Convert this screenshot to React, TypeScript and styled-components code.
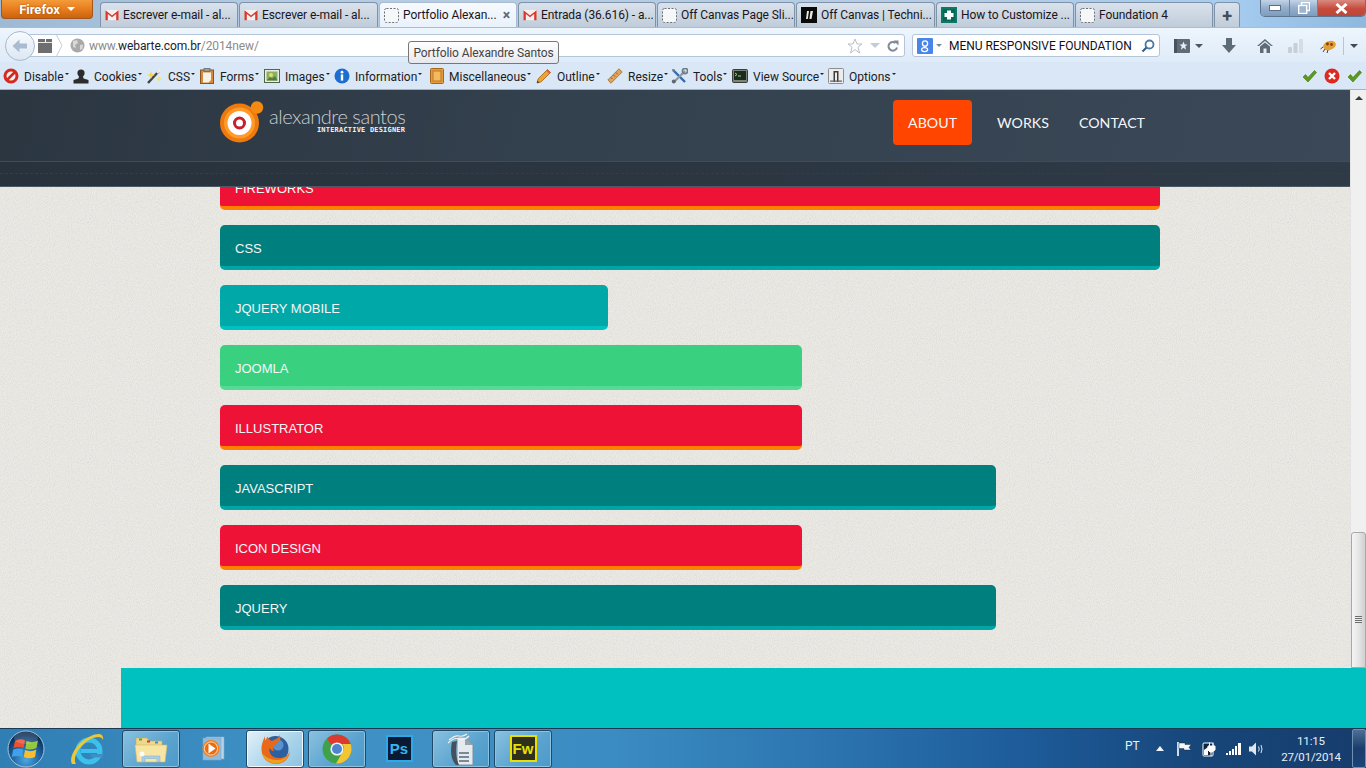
import React from "react";
import styled, { createGlobalStyle } from "styled-components";

const uiFont = `"Roboto", "Noto Sans", "Liberation Sans", sans-serif`;

const grain = `url("data:image/svg+xml,%3Csvg xmlns='http://www.w3.org/2000/svg' width='240' height='240'%3E%3Cfilter id='n'%3E%3CfeTurbulence type='fractalNoise' baseFrequency='.95' numOctaves='2' stitchTiles='stitch'/%3E%3CfeColorMatrix values='0 0 0 0 .45 0 0 0 0 .44 0 0 0 0 .4 0 0 0 .45 -.155'/%3E%3C/filter%3E%3Crect width='240' height='240' filter='url(%23n)'/%3E%3C/svg%3E")`;

const GlobalStyle = createGlobalStyle`
  html, body {
    margin: 0;
    padding: 0;
    height: 100%;
    overflow: hidden;
  }
  #root {
    height: 100%;
  }
`;

const Screen = styled.div`
  width: 1366px;
  height: 768px;
  display: flex;
  flex-direction: column;
  font-family: ${uiFont};
  position: relative;
  overflow: hidden;
`;

/* ---------- tab strip ---------- */

const TabStrip = styled.div`
  height: 27px;
  display: flex;
  flex: none;
  background: linear-gradient(90deg, #9db9d6 0%, #b4cbe2 20%, #b5cce4 70%, #a6cdf0 90%, #8fb8de 100%);
`;

const FirefoxButton = styled.div`
  width: 92px;
  height: 19px;
  margin: 0 7px 0 1px;
  flex: none;
  display: flex;
  align-items: center;
  justify-content: center;
  gap: 7px;
  color: #fff;
  font-size: 13px;
  font-weight: 700;
  border: 1px solid #a5561a;
  border-top: 0;
  border-radius: 0 0 4px 4px;
  box-sizing: border-box;
  background: linear-gradient(#f39b3a, #e87d1e 50%, #c9630e);
  text-shadow: 0 0 2px #8a4508;
`;

const Caret = styled.i<{ $size?: number; $color?: string }>`
  display: inline-block;
  width: 0;
  height: 0;
  flex: none;
  border-left: ${(p) => p.$size ?? 3}px solid transparent;
  border-right: ${(p) => p.$size ?? 3}px solid transparent;
  border-top: ${(p) => p.$size ?? 3}px solid ${(p) => p.$color ?? "#333"};
`;

const Tab = styled.div<{ $active?: boolean; $width: number }>`
  width: ${(p) => p.$width}px;
  height: 25px;
  margin-top: 2px;
  margin-right: 1px;
  flex: none;
  box-sizing: border-box;
  display: flex;
  align-items: center;
  gap: 4px;
  padding: 0 2px 0 4px;
  font-size: 12px;
  letter-spacing: -0.08px;
  color: #1a1420;
  white-space: nowrap;
  border: 1px solid ${(p) => (p.$active ? "#a8bbd0" : "#7f93a8")};
  border-bottom: 0;
  border-radius: 4px 4px 0 0;
  background: ${(p) =>
    p.$active
      ? "linear-gradient(#f6fafe, #e8f1fb)"
      : "linear-gradient(#d9e2ec, #c0ccd9)"};
  svg {
    flex: none;
  }
`;

const TabLabel = styled.span`
  flex: 1;
  min-width: 0;
`;

const TabClose = styled.span`
  color: #5f6a75;
  font-size: 14px;
  font-weight: 700;
  line-height: 1;
  margin-right: 4px;
`;

const NewTab = styled(Tab)`
  justify-content: center;
  padding: 0;
  color: #3f4d5c;
  font-size: 18px;
  font-weight: 700;
`;

const WindowControls = styled.div`
  position: absolute;
  top: 0;
  right: 0;
  width: 106px;
  height: 17px;
  display: flex;
  border: 1px solid #5d7590;
  border-top: 0;
  border-radius: 0 0 5px 5px;
  box-sizing: border-box;
  overflow: hidden;
`;

const WindowButton = styled.div<{ $close?: boolean; $width: number }>`
  width: ${(p) => p.$width}px;
  flex: ${(p) => (p.$close ? 1 : "none")};
  display: flex;
  align-items: center;
  justify-content: center;
  border-right: ${(p) => (p.$close ? 0 : "1px solid #6d84a0")};
  background: ${(p) =>
    p.$close
      ? "linear-gradient(#d98a80, #c74a3c 55%, #b8483a)"
      : "linear-gradient(#c2d4e6, #93aecb 50%, #7d9cbd)"};
`;

/* ---------- nav bar ---------- */

const NavBar = styled.div`
  height: 35px;
  flex: none;
  display: flex;
  align-items: center;
  box-sizing: border-box;
  padding: 1px 0 0 5px;
  position: relative;
  border-top: 1px solid #a9bcd0;
  background: linear-gradient(#edf5fd, #dfebf8);
`;

const BackCircle = styled.div`
  width: 30px;
  height: 30px;
  flex: none;
  z-index: 1;
  display: flex;
  align-items: center;
  justify-content: center;
  border-radius: 50%;
  border: 1px solid #a6b9cf;
  box-sizing: border-box;
  background: linear-gradient(#f8fbfe, #dce7f3);
`;

const UrlField = styled.div`
  width: 876px;
  height: 23px;
  margin-left: -6px;
  flex: none;
  display: flex;
  align-items: center;
  box-sizing: border-box;
  padding-left: 7px;
  background: #fff;
  border: 1px solid #b3c5d9;
  border-radius: 0 3px 3px 0;
`;

const IdentityBox = styled.div`
  width: 33px;
  height: 21px;
  flex: none;
  display: flex;
  align-items: center;
  overflow: hidden;
`;

const UrlText = styled.span`
  margin-left: 4px;
  font-size: 12px;
  color: #8b8b8b;
  letter-spacing: -0.1px;
  white-space: nowrap;
  flex: 1;
  b {
    color: #1a2230;
    font-weight: 400;
  }
`;

const UrlTools = styled.div`
  display: flex;
  align-items: center;
  gap: 7px;
  padding-right: 5px;
`;

const SearchField = styled.div`
  width: 248px;
  height: 23px;
  margin-left: 7px;
  flex: none;
  display: flex;
  align-items: center;
  box-sizing: border-box;
  padding: 0 4px 0 4px;
  background: #fff;
  border: 1px solid #b3c5d9;
  border-radius: 3px;
  font-size: 12px;
  letter-spacing: -0.03px;
  color: #10101c;
  white-space: nowrap;
`;

const EngineCaret = styled(Caret)`
  margin-left: 3px;
`;

const SearchLabel = styled.span`
  flex: 1;
  margin-left: 7px;
`;

const NavTools = styled.div`
  display: flex;
  align-items: center;
  margin-left: 11px;
`;

const NavSlot = styled.div<{ $width: number }>`
  width: ${(p) => p.$width}px;
  display: flex;
  align-items: center;
  justify-content: center;
  gap: 5px;
  flex: none;
`;

const NavSeparator = styled.div`
  width: 1px;
  height: 18px;
  background: #b7c6d6;
  flex: none;
`;

const Tooltip = styled.div`
  position: absolute;
  left: 408px;
  top: 41px;
  width: 151px;
  height: 23px;
  box-sizing: border-box;
  z-index: 5;
  display: flex;
  align-items: center;
  justify-content: center;
  font-size: 12px;
  letter-spacing: -0.1px;
  color: #444;
  background: linear-gradient(#fff, #e6e8ef);
  border: 1px solid #777;
  border-radius: 3px;
  white-space: nowrap;
`;

/* ---------- add-on bar ---------- */

const AddonBar = styled.div`
  height: 28px;
  flex: none;
  display: flex;
  align-items: center;
  box-sizing: border-box;
  padding-left: 3px;
  background: #d9e7f6;
  border-bottom: 1px solid #9fb2c6;
`;

const AddonItem = styled.div<{ $width: number }>`
  width: ${(p) => p.$width}px;
  flex: none;
  display: flex;
  align-items: center;
  gap: 5px;
  font-size: 12px;
  line-height: 16px;
  color: #1b1b22;
  white-space: nowrap;
  span {
    padding-top: 2px;
  }
`;

const AddonCaret = styled(Caret)`
  margin-left: -4px;
  margin-bottom: 3px;
`;

const AddonStatus = styled.div`
  margin-left: auto;
  display: flex;
  align-items: center;
  gap: 7px;
  padding-right: 4px;
`;

/* ---------- page ---------- */

const Viewport = styled.div`
  flex: 1;
  min-height: 0;
  position: relative;
  display: flex;
  flex-direction: column;
  background-color: #ebeae5;
  background-image: ${grain};
`;

const Header = styled.header`
  position: absolute;
  top: 0;
  left: 0;
  right: 16px;
  z-index: 3;
  height: 97px;
  border-bottom: 1px solid #4c5864;
  box-sizing: border-box;
  background: linear-gradient(100deg, #28323c, #2e3a46);
`;

const HeaderMain = styled.div`
  height: 72px;
  box-sizing: border-box;
  padding: 10px 0 0 220px;
  border-bottom: 1px solid #3f4c59;
  background: linear-gradient(100deg, #2b3641 0%, #33404d 40%, #3a4858 100%);
`;

const HeaderInner = styled.div`
  width: 940px;
  display: flex;
  justify-content: space-between;
  align-items: flex-start;
`;

const Logo = styled.div`
  display: flex;
  align-items: center;
  margin-top: 1px;
  gap: 5px;
`;

const LogoText = styled.div`
  display: flex;
  flex-direction: column;
  align-items: flex-end;
  margin-top: -3px;
`;

const LogoName = styled.span`
  font-family: "Lato", sans-serif;
  font-weight: 300;
  font-size: 20px;
  line-height: 19px;
  letter-spacing: -0.45px;
  color: #c9cdd1;
  white-space: nowrap;
`;

const LogoTag = styled.span`
  font-family: "DejaVu Sans Mono", monospace;
  font-weight: 700;
  font-size: 7px;
  line-height: 9px;
  letter-spacing: 0.2px;
  color: #f2f2f2;
  white-space: nowrap;
`;

const Menu = styled.nav`
  display: flex;
`;

const MenuLink = styled.a<{ $current?: boolean }>`
  height: 45px;
  padding: 0 15px;
  display: flex;
  align-items: center;
  border-radius: 4px;
  font-family: "Lato", sans-serif;
  font-size: 14.2px;
  font-weight: 400;
  color: #f4f7f9;
  background: ${(p) => (p.$current ? "#ff4500" : "transparent")};
  margin-right: ${(p) => (p.$current ? "10px" : "0")};
`;

const HeaderStrip = styled.div`
  height: 24px;
  box-sizing: border-box;
  padding-top: 11px;
  &::before {
    content: "";
    display: block;
    border-top: 1px dashed #323e4a;
  }
`;

const ScrollRow = styled.div`
  flex: 1;
  min-height: 0;
  display: flex;
`;

const Content = styled.main`
  flex: 1;
  min-width: 0;
  overflow: hidden;
  box-sizing: border-box;
  padding: 75px 0 0 220px;
`;

const Bars = styled.ul`
  width: 940px;
  margin: 0;
  padding: 0;
  list-style: none;
  display: flex;
  flex-direction: column;
  gap: 15px;
`;

const tones = {
  red: { fill: "#ef1237", edge: "#ff8000" },
  teal: { fill: "#007f7f", edge: "#00a5a5" },
  aqua: { fill: "#00a8a8", edge: "#00c1c1" },
  green: { fill: "#39d07f", edge: "#55da94" },
};

const Bar = styled.li<{ $tone: keyof typeof tones; $span: number }>`
  width: ${(p) => p.$span}px;
  height: 45px;
  box-sizing: border-box;
  padding: 6px 0 0 15px;
  display: flex;
  align-items: center;
  border-radius: 5px;
  border-bottom: 4px solid ${(p) => tones[p.$tone].edge};
  background: ${(p) => tones[p.$tone].fill};
  color: #f6f6f6;
  font-family: "Liberation Sans", Arial, sans-serif;
  font-size: 13px;
`;

const Scrollbar = styled.div`
  width: 16px;
  flex: none;
  display: flex;
  flex-direction: column;
  justify-content: space-between;
  background: #f0f0f0;
  border-left: 1px solid #e4e4e4;
  box-sizing: border-box;
`;

const ScrollArrow = styled.div`
  margin: 6px auto 0;
  width: 0;
  height: 0;
  border-left: 4px solid transparent;
  border-right: 4px solid transparent;
  border-bottom: 4px solid #3a3a3a;
`;

const ScrollThumb = styled.div`
  height: 136px;
  box-sizing: border-box;
  padding-top: 83px;
  border: 1px solid #a9a9a9;
  border-radius: 3px 3px 0 0;
  background: linear-gradient(90deg, #f4f4f4, #e6e6e6 50%, #cfcfcf);
  &::before {
    content: "";
    display: block;
    width: 7px;
    height: 7px;
    margin: 0 auto;
    background: repeating-linear-gradient(#6d6d6d 0 1px, #ececec 1px 2px);
  }
`;

const Footer = styled.footer`
  height: 60px;
  flex: none;
  margin-left: 121px;
  background: #00c1c0;
`;

/* ---------- taskbar ---------- */

const Taskbar = styled.div`
  height: 40px;
  flex: none;
  display: flex;
  align-items: center;
  box-sizing: border-box;
  border-top: 1px solid #1c3a55;
  background: linear-gradient(90deg, #2f7eb4 0%, #3f92c6 22%, #3b8cc2 45%, #2a72ae 62%, #1d5b9a 75%, #174679 88%, #163c6c 100%);
`;

const StartSlot = styled.div`
  width: 52px;
  height: 39px;
  flex: none;
  display: flex;
  align-items: center;
  justify-content: center;
`;

const IeSlot = styled.div`
  width: 70px;
  height: 39px;
  flex: none;
  display: flex;
  align-items: center;
  justify-content: center;
`;

const TaskButton = styled.div<{ $state?: "open" | "active" }>`
  width: 58px;
  height: 38px;
  margin-right: 4px;
  flex: none;
  display: flex;
  align-items: center;
  justify-content: center;
  box-sizing: border-box;
  border-radius: 3px;
  border: 1px solid ${(p) => (p.$state ? "#1f4a68" : "transparent")};
  box-shadow: ${(p) =>
    p.$state === "active"
      ? "inset 0 0 0 1px #f2f8fc"
      : p.$state === "open"
        ? "inset 0 0 0 1px #8cc3e0"
        : "none"};
  background: ${(p) =>
    p.$state === "active"
      ? "linear-gradient(135deg, #e3f1f9, #a9d3ea 60%, #8cc3e2)"
      : p.$state === "open"
        ? "linear-gradient(135deg, #8ac1df, #5aa3cf 60%, #4c99c9)"
        : "transparent"};
  font-family: "Liberation Sans", sans-serif;
`;

const AppTile = styled.div<{ $edge: string; $ink: string; $fill: string }>`
  width: 27px;
  height: 27px;
  box-sizing: border-box;
  display: flex;
  align-items: center;
  justify-content: center;
  border: 2px solid ${(p) => p.$edge};
  background: ${(p) => p.$fill};
  color: ${(p) => p.$ink};
  font-size: 15px;
  font-weight: 700;
`;

const Tray = styled.div`
  margin-left: auto;
  height: 39px;
  display: flex;
  align-items: center;
  color: #e8eff7;
`;

const TrayLang = styled.span`
  font-size: 12px;
  width: 29px;
  margin-bottom: 6px;
`;

const TraySlot = styled.div<{ $width: number }>`
  width: ${(p) => p.$width}px;
  display: flex;
  justify-content: center;
  flex: none;
  svg {
    flex: none;
  }
`;

const Clock = styled.div`
  width: 70px;
  margin-left: 14px;
  text-align: center;
  font-size: 11.5px;
  letter-spacing: -0.15px;
  line-height: 16px;
  flex: none;
`;

const ShowDesktop = styled.div`
  width: 14px;
  height: 39px;
  margin-left: 6px;
  flex: none;
  box-sizing: border-box;
  border: 1px solid #6f8fb3;
  border-radius: 2px;
  background: linear-gradient(#4d6f97, #1a3d6c 50%, #1a4478);
`;

/* ---------- drawn icons ---------- */

const GmailIcon = () => (
  <svg width="14" height="12" viewBox="0 0 15 12">
    <rect x="0.5" y="0.5" width="14" height="11" fill="#f1f1f1" />
    <path d="M0.5 11.5V1L7.5 6.5L14.5 1V11.5H12V5L7.5 8.5L3 5V11.5Z" fill="#d9382c" />
  </svg>
);

const BlankPageIcon = () => (
  <svg width="15" height="15" viewBox="0 0 15 15">
    <rect x="0.5" y="0.5" width="14" height="14" rx="2" fill="#f5f7f9" stroke="#6a6f75" strokeDasharray="2 1.5" />
  </svg>
);

const TechniqueIcon = () => (
  <svg width="16" height="16" viewBox="0 0 16 16">
    <rect width="16" height="16" fill="#0a0a0a" />
    <path d="M6 4H8L6.8 12H5ZM9.5 4H12L10.5 12H8.4Z" fill="#e8e8e8" />
  </svg>
);

const CrossIcon = () => (
  <svg width="16" height="16" viewBox="0 0 16 16">
    <rect width="16" height="16" fill="#0a7a62" />
    <rect x="2" y="2" width="12" height="12" fill="#034" opacity="0.25" />
    <path d="M6 3.5H10V6H12.5V10H10V12.5H6V10H3.5V6H6Z" fill="#fff" />
  </svg>
);

const BackArrow = () => (
  <svg width="18" height="18" viewBox="0 0 18 18">
    <path d="M1.5 9L8.5 2.5V6.5H16V11.5H8.5V15.5Z" fill="#a9bbcf" />
  </svg>
);

const BagIcon = () => (
  <svg width="27" height="23" viewBox="0 0 27 23">
    <path d="M1 6H8V9H9V6H15V20H1Z" fill="#6e6e70" transform="translate(0 -1)" />
    <rect x="1" y="8" width="14" height="1" fill="#e8e8e8" />
    <path d="M19 0L25 11.5L19 23" fill="#fff" stroke="#bfcddb" />
  </svg>
);

const GlobeIcon = () => (
  <svg width="15" height="15" viewBox="0 0 15 15">
    <circle cx="7.5" cy="7.5" r="7" fill="#a9a9a9" />
    <path d="M3 3L7 2L8 5L5 7L6 10L3 9ZM10 7L13 6.5L12.5 11L10 12Z" fill="#d8d8d8" />
  </svg>
);

const StarIcon = ({ size = 16, fill = "#fff", stroke = "#b8bfc7" }) => (
  <svg width={size} height={size} viewBox="0 0 16 16">
    <path d="M8 1L10 6H15L11 9.2L12.5 15L8 11.6L3.5 15L5 9.2L1 6H6Z" fill={fill} stroke={stroke} />
  </svg>
);

const ReloadIcon = () => (
  <svg width="12" height="12" viewBox="0 0 12 12">
    <path d="M10 7.5A4.3 4.3 0 1 1 8.6 3" fill="none" stroke="#7e8a96" strokeWidth="2" />
    <path d="M6.5 0.5H11.5V5.5Z" fill="#7e8a96" />
  </svg>
);

const GoogleBadge = () => (
  <svg width="16" height="16" viewBox="0 0 16 16">
    <rect width="16" height="16" rx="1" fill="#4a86e8" />
    <ellipse cx="8" cy="5.5" rx="2.6" ry="2.7" fill="none" stroke="#fff" strokeWidth="1.3" />
    <ellipse cx="7.6" cy="11.6" rx="3" ry="2" fill="none" stroke="#fff" strokeWidth="1.3" />
    <path d="M8 8V9.6" stroke="#fff" strokeWidth="1.2" />
  </svg>
);

const SearchIcon = () => (
  <svg width="14" height="14" viewBox="0 0 14 14">
    <circle cx="8.5" cy="5.5" r="4" fill="none" stroke="#4a79a8" strokeWidth="1.8" />
    <path d="M5.5 8.5L1.5 12.5" stroke="#2f5f90" strokeWidth="2.2" />
  </svg>
);

const BookmarksIcon = () => (
  <svg width="16" height="14" viewBox="0 0 16 14">
    <rect width="16" height="14" rx="1" fill="#5e6b78" />
    <rect width="3" height="14" fill="#47525e" />
    <path d="M9.5 2.5L10.7 5.5H13.5L11.3 7.4L12.1 10.8L9.5 8.8L6.9 10.8L7.7 7.4L5.5 5.5H8.3Z" fill="#e9eef3" />
  </svg>
);

const DownloadIcon = () => (
  <svg width="14" height="15" viewBox="0 0 14 15">
    <path d="M4 0H10V7H14L7 15L0 7H4Z" fill="#5e6b78" />
  </svg>
);

const HomeIcon = () => (
  <svg width="16" height="14" viewBox="0 0 16 14">
    <path d="M8 0L16 7H14L8 2L2 7H0Z" fill="#5e6b78" />
    <path d="M3 7.5L8 3.4L13 7.5V14H9.5V9.5H6.5V14H3Z" fill="#5e6b78" />
  </svg>
);

const SignalIcon = () => (
  <svg width="15" height="14" viewBox="0 0 15 14">
    <rect x="0" y="8" width="4" height="6" rx="1" fill="#c6ced6" />
    <rect x="5.5" y="4" width="4" height="10" rx="1" fill="#c6ced6" />
    <rect x="11" y="0" width="4" height="14" rx="1" fill="#d6dce2" />
  </svg>
);

const BugIcon = () => (
  <svg width="17" height="14" viewBox="0 0 17 14">
    <ellipse cx="9.5" cy="6.5" rx="6.5" ry="4.5" fill="#e3a032" transform="rotate(-18 9.5 6.5)" />
    <circle cx="7.5" cy="5" r="1.4" fill="#7a3a12" />
    <circle cx="11.5" cy="5.5" r="1.4" fill="#9c3a12" />
    <path d="M3 8L0.5 10M5 10L3 13M8 11L7 14" stroke="#4a3a28" />
  </svg>
);

const Glyph = ({ name }: { name: string }) => {
  switch (name) {
    case "Disable":
      return (
        <svg width="16" height="16" viewBox="0 0 16 16">
          <circle cx="8" cy="8" r="6" fill="#f2f2f2" stroke="#d62a1f" strokeWidth="3" />
          <path d="M3.5 12.5L12.5 3.5" stroke="#d62a1f" strokeWidth="2.6" />
        </svg>
      );
    case "Cookies":
      return (
        <svg width="16" height="16" viewBox="0 0 16 16">
          <circle cx="8" cy="5" r="3.6" fill="#2c2c2c" />
          <path d="M6 8H10L10.5 10.5L15.5 12V15.5H0.5V12L5.5 10.5Z" fill="#2c2c2c" />
        </svg>
      );
    case "CSS":
      return (
        <svg width="16" height="16" viewBox="0 0 16 16">
          <path d="M1 15L12 3" stroke="#444" strokeWidth="2.4" />
          <path d="M10 5L13 1.6" stroke="#eee" strokeWidth="2.4" />
          <path d="M4 3L5 6L8 7L5 8L4 11L3 8L0.5 7L3 6Z" fill="#f2d640" />
          <path d="M12 8L13 10L15 11L13 12L12 14L11 12L9.5 11L11 10Z" fill="#f5e270" />
        </svg>
      );
    case "Forms":
      return (
        <svg width="16" height="16" viewBox="0 0 16 16">
          <rect x="1.5" y="2" width="13" height="13.5" fill="#d58a3c" stroke="#8a5520" />
          <path d="M4 4.5H12V12L9.5 14.5H4Z" fill="#f6f2e6" />
          <rect x="5" y="0.5" width="6" height="3" fill="#9a9a9a" stroke="#555" strokeWidth="0.6" />
        </svg>
      );
    case "Images":
      return (
        <svg width="16" height="14" viewBox="0 0 16 14">
          <rect x="0.5" y="0.5" width="15" height="13" fill="#e9efe2" stroke="#55634a" />
          <rect x="2.5" y="2.5" width="11" height="9" fill="#87b06a" />
          <circle cx="7" cy="6" r="2" fill="#f1d75e" />
          <path d="M2.5 11.5L6 8L8 9.5L11 7L13.5 11.5Z" fill="#4f7d3c" />
        </svg>
      );
    case "Information":
      return (
        <svg width="16" height="16" viewBox="0 0 16 16">
          <circle cx="8" cy="8" r="7.5" fill="#1c6fd0" />
          <circle cx="8" cy="4.2" r="1.4" fill="#fff" />
          <rect x="6.8" y="6.4" width="2.4" height="6.2" fill="#fff" />
        </svg>
      );
    case "Miscellaneous":
      return (
        <svg width="14" height="16" viewBox="0 0 14 16">
          <rect x="0.5" y="0.5" width="13" height="15" rx="1" fill="#e69a3a" stroke="#a8661a" />
          <rect x="3" y="3" width="8" height="10" fill="#f4b860" stroke="#b97a28" />
        </svg>
      );
    case "Outline":
      return (
        <svg width="16" height="16" viewBox="0 0 16 16">
          <path d="M1 15L2.2 10.8L11.5 1.5L14.5 4.5L5.2 13.8Z" fill="#efa42f" stroke="#9c6414" strokeWidth="0.8" />
          <path d="M11.5 1.5L14.5 4.5L13.2 5.8L10.2 2.8Z" fill="#e0584a" />
          <path d="M1 15L1.6 12.8L3.2 14.4Z" fill="#333" />
        </svg>
      );
    case "Resize":
      return (
        <svg width="16" height="16" viewBox="0 0 16 16">
          <path d="M0.8 12L12 0.8L15.2 4L4 15.2Z" fill="#dfa45a" stroke="#a06a28" strokeWidth="0.8" />
          <path d="M4 9.5L5.5 11M6.5 7L8 8.5M9 4.5L10.5 6" stroke="#8a5a20" />
        </svg>
      );
    case "Tools":
      return (
        <svg width="17" height="16" viewBox="0 0 17 16">
          <path d="M2 2L14 14" stroke="#2f6cb3" strokeWidth="2.4" />
          <path d="M1 1L3.5 1.5L4 4L2 3.5Z" fill="#777" />
          <path d="M14 3L3 14" stroke="#8d98a3" strokeWidth="2.2" />
          <circle cx="14" cy="3" r="2.6" fill="none" stroke="#6f7a85" strokeWidth="1.6" />
          <circle cx="2.8" cy="13.6" r="2" fill="#5d6873" />
        </svg>
      );
    case "View Source":
      return (
        <svg width="16" height="14" viewBox="0 0 16 14">
          <rect x="0.5" y="0.5" width="15" height="13" rx="1" fill="#7d8578" stroke="#3a3f38" />
          <rect x="2" y="2" width="12" height="9" fill="#1d2a20" />
          <path d="M3 4L5 5.5L3 7M6 7H9" stroke="#8fe07a" fill="none" />
        </svg>
      );
    default:
      return (
        <svg width="16" height="16" viewBox="0 0 16 16">
          <rect x="0.5" y="0.5" width="15" height="15" rx="1" fill="#ececec" stroke="#8d8d8d" />
          <path d="M5.5 14V3H10.5V14H9V4.5H7V14Z" fill="#3c3c3c" />
          <rect x="2" y="12.5" width="12" height="1.2" fill="#5e5e5e" />
        </svg>
      );
  }
};

const CheckIcon = () => (
  <svg width="15" height="14" viewBox="0 0 15 14">
    <path d="M1 8L3.5 5.5L6 8.5L12.5 1.5L14.5 3.5L6 13Z" fill="#5b9a1a" stroke="#3f7210" strokeWidth="0.6" />
  </svg>
);

const ErrorIcon = () => (
  <svg width="16" height="16" viewBox="0 0 16 16">
    <circle cx="8" cy="8" r="7.5" fill="#dd2a20" />
    <path d="M5 5L11 11M11 5L5 11" stroke="#fff" strokeWidth="2.4" />
  </svg>
);

const LogoMark = () => (
  <svg width="44" height="42" viewBox="0 0 44 42">
    <circle cx="19.5" cy="22" r="19.5" fill="#ee7a0c" />
    <circle cx="19.5" cy="22" r="15.5" fill="#ff9a2c" />
    <circle cx="19.5" cy="22" r="12" fill="#fff" />
    <circle cx="19.5" cy="22" r="5" fill="none" stroke="#c51f30" strokeWidth="3" />
    <circle cx="37" cy="6.5" r="6.2" fill="#f58a12" />
  </svg>
);

const StartOrb = () => (
  <svg width="38" height="38" viewBox="0 0 38 38">
    <defs>
      <radialGradient id="orb" cx="50%" cy="80%" r="70%">
        <stop offset="0" stopColor="#4aa8e4" />
        <stop offset="0.6" stopColor="#1c5f9c" />
        <stop offset="1" stopColor="#0b2c52" />
      </radialGradient>
    </defs>
    <circle cx="19" cy="19" r="18" fill="url(#orb)" stroke="#a5c4dc" />
    <path d="M8 11Q13 8 18 10.5L16.6 18Q12 16 6.5 18Z" fill="#ee4f2e" />
    <path d="M19.5 11Q25 13.5 31 10.5L29.5 18Q24 20.5 18.3 18.5Z" fill="#94c83e" />
    <path d="M6.3 19.5Q12 17.5 16.3 19.5L15 27Q10.5 25 4.8 27Z" fill="#42a0ea" />
    <path d="M18 20Q24 22.5 29.3 19.5L28 27Q22.5 29.5 16.8 27Z" fill="#f9be30" />
    <ellipse cx="19" cy="8" rx="12" ry="6" fill="#fff" opacity="0.16" />
  </svg>
);

const IeIcon = () => (
  <svg width="36" height="36" viewBox="0 0 36 36">
    <circle cx="20" cy="20" r="11" fill="none" stroke="#3cc0ec" strokeWidth="5" />
    <rect x="12" y="18" width="19" height="4" fill="#3cc0ec" />
    <rect x="22" y="23" width="12" height="3.4" fill="#3f8fc4" />
    <path d="M3 33C-1 27 8 10 22 5C29 2 35 2 34 9C33 5 27 5 20 9C10 15 3 27 7 33Z" fill="#e8c93a" />
  </svg>
);

const FolderIcon = () => (
  <svg width="34" height="32" viewBox="0 0 34 32">
    <path d="M2 5H13L15 8H28V14H2Z" fill="#f0d78a" stroke="#c7a95a" strokeWidth="0.6" />
    <rect x="5" y="5.5" width="3" height="2" fill="#3cae4a" />
    <rect x="13" y="7.5" width="3" height="2" fill="#d33a2c" />
    <rect x="21" y="8.5" width="3" height="2" fill="#3a8fd8" />
    <path d="M1 12H33L31 29H3Z" fill="#f7e6a3" stroke="#d4b765" strokeWidth="0.6" />
    <path d="M8 29V23H26V29H23V25.5H11V29Z" fill="#a8d0ec" stroke="#7fa9c8" strokeWidth="0.5" />
    <circle cx="8" cy="21" r="2.5" fill="#fff" opacity="0.9" />
  </svg>
);

const MediaIcon = () => (
  <svg width="30" height="26" viewBox="0 0 30 26">
    <rect x="8" y="1" width="18" height="22" fill="#b6d3e8" stroke="#83aac8" strokeWidth="0.6" />
    <rect x="5" y="2" width="18" height="22" fill="#8fbbdc" stroke="#7ba7c8" strokeWidth="0.6" />
    <circle cx="13" cy="12.5" r="8.5" fill="#f28020" />
    <circle cx="13" cy="12.5" r="6.6" fill="#e86c10" stroke="#fbd9b6" />
    <path d="M10.5 7.5L17.5 12.5L10.5 17.5Z" fill="#fff" />
  </svg>
);

const FirefoxIcon = () => (
  <svg width="32" height="32" viewBox="0 0 32 32">
    <circle cx="16.5" cy="16" r="13" fill="#2e5f9e" />
    <circle cx="19" cy="12" r="5.5" fill="#5d91cc" />
    <path d="M6 3C4 8 2 12 2.5 17C3 26 10 31 17 31C25 31 30.5 25 31 18C29.5 23 25 25 20 25C13 25 9.5 20 10.5 15C12 17 13 18 15 18.5C13.5 15 15 12 18 10C21 8 23 5 20 2C21 5 16 6 13 8C11 7 9 6 8.5 3.5C7.5 5 7 6.5 7 8C6 6.5 5.8 5 6 3Z" fill="#e8691a" />
    <path d="M3 20C5 27 11 30.5 17 30.5C23 30.5 28 26.5 30 21C27 25 23 27 18 27C11 27 6 24 3 20Z" fill="#f0a020" />
  </svg>
);

const ChromeIcon = () => (
  <svg width="30" height="30" viewBox="0 0 30 30">
    <circle cx="15" cy="15" r="14.5" fill="#3fa14a" />
    <path d="M15 0.5A14.5 14.5 0 0 1 28.7 10H15A5 5 0 0 0 10.5 12.5L5 4.5A14.5 14.5 0 0 1 15 0.5Z" fill="#db3a2e" />
    <path d="M28.7 10A14.5 14.5 0 0 1 14 29.4L20 19A6 6 0 0 0 20 10Z" fill="#f4c530" />
    <circle cx="15" cy="15" r="6.6" fill="#f2f4f6" />
    <circle cx="15" cy="15" r="5" fill="#4d86cf" />
  </svg>
);

const DocumentIcon = () => (
  <svg width="32" height="34" viewBox="0 0 32 34">
    <path d="M12 5H20L28 13V33H12Z" fill="#e4ebf0" stroke="#7d8f9c" />
    <path d="M20 5L28 13H20Z" fill="#94a5b1" />
    <path d="M7 10C5 20 6 28 11 33H14C11 26 10 18 12 9Z" fill="#44525e" />
    <path d="M14 21H24M14 25H24M14 29H24" stroke="#5a6975" strokeWidth="1.6" />
    <path d="M3 11Q9 5 14 7Q19 9 24 4M4 8Q10 3 14 4Q18 5 22 2" stroke="#f2f2f2" strokeWidth="1.2" fill="none" />
  </svg>
);

const TrayFlag = () => (
  <svg width="14" height="16" viewBox="0 0 14 16">
    <path d="M1 1V15" stroke="#fff" strokeWidth="1.6" />
    <path d="M2 2H8V3.5H14L12 6.5L14 9H7V7.5H2Z" fill="#f5f7fa" stroke="#0c1e36" strokeWidth="0.4" />
  </svg>
);

const TrayPower = () => (
  <svg width="15" height="16" viewBox="0 0 15 16">
    <rect x="1" y="2" width="10" height="13" rx="1" fill="#0d2342" stroke="#fff" />
    <path d="M2 9L6 6V14H2Z" fill="#fff" />
    <path d="M6 5H13V9L10 11H8L6 9ZM7.5 1.5V5M11 1.5V5M9 11V15" fill="#fff" stroke="#fff" />
  </svg>
);

const TraySignal = () => (
  <svg width="16" height="12" viewBox="0 0 16 12">
    <rect x="0" y="10" width="2" height="2" fill="#fff" />
    <rect x="3" y="8" width="2" height="4" fill="#fff" />
    <rect x="6" y="6" width="2" height="6" fill="#fff" />
    <rect x="9" y="3" width="2" height="9" fill="#fff" />
    <rect x="12" y="0" width="3" height="12" fill="#fff" />
  </svg>
);

const TraySound = () => (
  <svg width="16" height="14" viewBox="0 0 16 14">
    <path d="M0 4.5H3L7 0.5V13.5L3 9.5H0Z" fill="#dfe6ee" />
    <path d="M9.5 4.5Q11 7 9.5 9.5M12 3Q14 7 12 11" stroke="#dfe6ee" fill="none" />
  </svg>
);

/* ---------- data ---------- */

const tabs: { label: string; icon: React.ReactNode; width: number; active?: boolean }[] = [
  { label: "Escrever e-mail - al...", icon: <GmailIcon />, width: 138 },
  { label: "Escrever e-mail - al...", icon: <GmailIcon />, width: 139 },
  { label: "Portfolio Alexan...", icon: <BlankPageIcon />, width: 138, active: true },
  { label: "Entrada (36.616) - a...", icon: <GmailIcon />, width: 138 },
  { label: "Off Canvas Page Sli...", icon: <BlankPageIcon />, width: 138 },
  { label: "Off Canvas | Techni...", icon: <TechniqueIcon />, width: 139 },
  { label: "How to Customize ...", icon: <CrossIcon />, width: 138 },
  { label: "Foundation 4", icon: <BlankPageIcon />, width: 138 },
];

const addons = [
  { name: "Disable", width: 70 },
  { name: "Cookies", width: 74 },
  { name: "CSS", width: 52 },
  { name: "Forms", width: 65 },
  { name: "Images", width: 70 },
  { name: "Information", width: 96 },
  { name: "Miscellaneous", width: 106 },
  { name: "Outline", width: 71 },
  { name: "Resize", width: 64 },
  { name: "Tools", width: 61 },
  { name: "View Source", width: 96 },
  { name: "Options", width: 80 },
];

const skills: { label: string; tone: keyof typeof tones; span: number }[] = [
  { label: "FIREWORKS", tone: "red", span: 940 },
  { label: "CSS", tone: "teal", span: 940 },
  { label: "JQUERY MOBILE", tone: "aqua", span: 388 },
  { label: "JOOMLA", tone: "green", span: 582 },
  { label: "ILLUSTRATOR", tone: "red", span: 582 },
  { label: "JAVASCRIPT", tone: "teal", span: 776 },
  { label: "ICON DESIGN", tone: "red", span: 582 },
  { label: "JQUERY", tone: "teal", span: 776 },
];

const App = () => {
  return (
    <Screen>
      <GlobalStyle />

      <TabStrip>
        <FirefoxButton>
          Firefox <Caret $size={4} $color="#fff" />
        </FirefoxButton>
        {tabs.map((tab, i) => (
          <Tab key={i} $width={tab.width} $active={tab.active}>
            {tab.icon}
            <TabLabel>{tab.label}</TabLabel>
            {tab.active && <TabClose>×</TabClose>}
          </Tab>
        ))}
        <NewTab $width={26}>+</NewTab>
        <WindowControls>
          <WindowButton $width={28}>
            <svg width="12" height="6" viewBox="0 0 12 6">
              <rect x="0.5" y="0.5" width="11" height="5" fill="#fff" stroke="#5d6f85" />
            </svg>
          </WindowButton>
          <WindowButton $width={27}>
            <svg width="12" height="12" viewBox="0 0 12 12">
              <rect x="3.5" y="0.5" width="8" height="8" fill="none" stroke="#fff" strokeWidth="1.4" />
              <rect x="0.7" y="3.5" width="8" height="8" fill="#9db5cf" stroke="#fff" strokeWidth="1.4" />
            </svg>
          </WindowButton>
          <WindowButton $width={50} $close>
            <svg width="13" height="11" viewBox="0 0 13 11">
              <path d="M1.5 1L11.5 10M11.5 1L1.5 10" stroke="#fff" strokeWidth="3" />
            </svg>
          </WindowButton>
        </WindowControls>
      </TabStrip>

      <NavBar>
        <BackCircle>
          <BackArrow />
        </BackCircle>
        <UrlField>
          <IdentityBox>
            <BagIcon />
          </IdentityBox>
          <GlobeIcon />
          <UrlText>
            www.<b>webarte.com.br</b>/2014new/
          </UrlText>
          <UrlTools>
            <StarIcon />
            <Caret $size={5} $color="#c3ccd5" />
            <ReloadIcon />
          </UrlTools>
        </UrlField>
        <SearchField>
          <GoogleBadge />
          <EngineCaret $color="#7f8a95" />
          <SearchLabel>MENU RESPONSIVE FOUNDATION</SearchLabel>
          <SearchIcon />
        </SearchField>
        <NavTools>
          <NavSlot $width={34}>
            <BookmarksIcon />
            <Caret $size={4} $color="#4a5560" />
          </NavSlot>
          <NavSlot $width={48}>
            <DownloadIcon />
          </NavSlot>
          <NavSlot $width={24}>
            <HomeIcon />
          </NavSlot>
          <NavSlot $width={36}>
            <SignalIcon />
          </NavSlot>
          <NavSlot $width={30}>
            <BugIcon />
          </NavSlot>
          <NavSeparator />
          <NavSlot $width={20}>
            <Caret $size={4} $color="#3f4a55" />
          </NavSlot>
        </NavTools>
      </NavBar>

      <Tooltip>Portfolio Alexandre Santos</Tooltip>

      <AddonBar>
        {addons.map((item) => (
          <AddonItem key={item.name} $width={item.width}>
            <Glyph name={item.name} />
            <span>{item.name}</span>
            <AddonCaret $size={2} $color="#222" />
          </AddonItem>
        ))}
        <AddonStatus>
          <CheckIcon />
          <ErrorIcon />
          <CheckIcon />
        </AddonStatus>
      </AddonBar>

      <Viewport>
        <Header>
          <HeaderMain>
            <HeaderInner>
              <Logo>
                <LogoMark />
                <LogoText>
                  <LogoName>alexandre santos</LogoName>
                  <LogoTag>INTERACTIVE DESIGNER</LogoTag>
                </LogoText>
              </Logo>
              <Menu>
                <MenuLink $current>ABOUT</MenuLink>
                <MenuLink>WORKS</MenuLink>
                <MenuLink>CONTACT</MenuLink>
              </Menu>
            </HeaderInner>
          </HeaderMain>
          <HeaderStrip />
        </Header>

        <ScrollRow>
          <Content>
            <Bars>
              {skills.map((skill) => (
                <Bar key={skill.label} $tone={skill.tone} $span={skill.span}>
                  {skill.label}
                </Bar>
              ))}
            </Bars>
          </Content>
          <Scrollbar>
            <ScrollArrow />
            <ScrollThumb />
          </Scrollbar>
        </ScrollRow>
        <Footer />
      </Viewport>

      <Taskbar>
        <StartSlot>
          <StartOrb />
        </StartSlot>
        <IeSlot>
          <IeIcon />
        </IeSlot>
        <TaskButton $state="open">
          <FolderIcon />
        </TaskButton>
        <TaskButton>
          <MediaIcon />
        </TaskButton>
        <TaskButton $state="active">
          <FirefoxIcon />
        </TaskButton>
        <TaskButton $state="open">
          <ChromeIcon />
        </TaskButton>
        <TaskButton>
          <AppTile $edge="#2fa8e8" $ink="#35b6f0" $fill="#0b1a33">Ps</AppTile>
        </TaskButton>
        <TaskButton $state="open">
          <DocumentIcon />
        </TaskButton>
        <TaskButton $state="open">
          <AppTile $edge="#e8e000" $ink="#e8e000" $fill="#2f2f1e">Fw</AppTile>
        </TaskButton>
        <Tray>
          <TrayLang>PT</TrayLang>
          <TraySlot $width={12}>
            <svg width="8" height="5" viewBox="0 0 8 5">
              <path d="M4 0L8 5H0Z" fill="#f2f5f8" />
            </svg>
          </TraySlot>
          <TraySlot $width={36}>
            <TrayFlag />
          </TraySlot>
          <TraySlot $width={14}>
            <TrayPower />
          </TraySlot>
          <TraySlot $width={36}>
            <TraySignal />
          </TraySlot>
          <TraySlot $width={10}>
            <TraySound />
          </TraySlot>
          <Clock>
            <div>11:15</div>
            <div>27/01/2014</div>
          </Clock>
          <ShowDesktop />
        </Tray>
      </Taskbar>
    </Screen>
  );
};

export default App;
